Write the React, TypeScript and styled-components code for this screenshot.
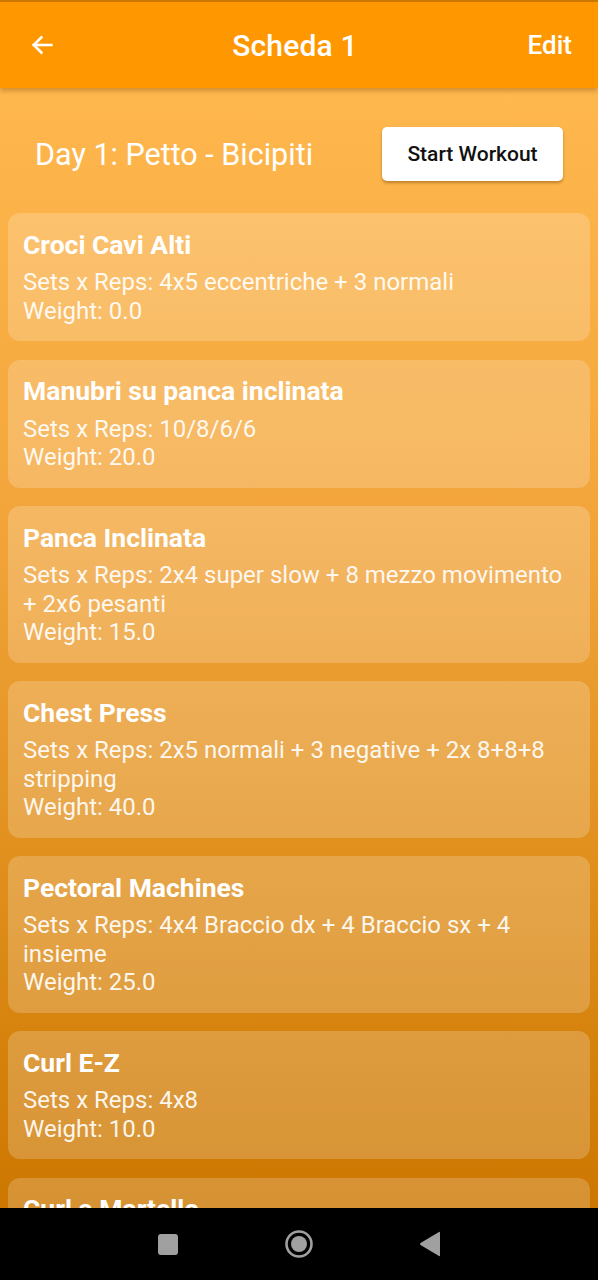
import React from "react";
import styled, { createGlobalStyle } from "styled-components";

const Global = createGlobalStyle`
  html, body { margin: 0; padding: 0; background: #000; }
  body { font-family: Roboto, "Noto Sans", "Liberation Sans", sans-serif; }
  * { box-sizing: border-box; }
`;

const Screen = styled.div`
  width: 598px;
  height: 1280px;
  display: flex;
  flex-direction: column;
  overflow: hidden;
  position: relative;
`;

const Header = styled.header`
  height: 88px;
  flex: none;
  background: #ff9800;
  border-top: 2px solid #c97800;
  display: grid;
  grid-template-columns: 1fr auto 1fr;
  align-items: center;
  padding: 0 26px 0 28px;
  color: #fff;
  position: relative;
  z-index: 2;
  box-shadow: 0 3px 5px rgba(120, 70, 0, 0.35);
`;

const BackButton = styled.button`
  justify-self: start;
  background: none;
  border: none;
  padding: 0;
  display: flex;
  color: #fff;
`;

const Title = styled.h1`
  margin: 0;
  font-size: 30px;
  font-weight: 500;
  letter-spacing: 0.2px;
  transform: translateX(-5px);
`;

const EditButton = styled.button`
  justify-self: end;
  background: none;
  border: none;
  padding: 0;
  color: #fff;
  font-family: inherit;
  font-size: 26px;
  font-weight: 500;
`;

const Content = styled.main`
  flex: 1;
  overflow: hidden;
  background: linear-gradient(180deg, #ffb84e 0%, #f2a43a 40%, #e08f1c 70%, #cc7700 100%);
  padding: 39px 8px 0 8px;
  display: flex;
  flex-direction: column;
`;

const DayRow = styled.div`
  display: flex;
  align-items: center;
  justify-content: space-between;
  padding: 0 27px 0 27px;
  height: 56px;
  margin-bottom: 32px;
`;

const DayTitle = styled.h2`
  margin: 0;
  font-size: 30.5px;
  font-weight: 400;
  color: #fff;
`;

const StartButton = styled.button`
  background: #fff;
  border: none;
  border-radius: 5px;
  width: 181px;
  height: 54px;
  font-family: inherit;
  font-size: 21px;
  font-weight: 500;
  color: #111;
  box-shadow: 0 2px 3px rgba(120, 70, 0, 0.45);
`;

const List = styled.div`
  display: flex;
  flex-direction: column;
  gap: 18.5px;
`;

const Card = styled.section`
  background: rgba(255, 255, 255, 0.2);
  border-radius: 12px;
  padding: 16.5px 15px 16px 15px;
  color: #fff;
  flex: none;
`;

const CardTitle = styled.h3`
  margin: 0 0 8.5px 0;
  font-size: 26.5px;
  font-weight: 700;
  line-height: 30px;
`;

const CardLine = styled.p`
  margin: 0;
  font-size: 24px;
  font-weight: 400;
  line-height: 28.5px;
  color: rgba(255, 255, 255, 0.93);
`;

const NavBar = styled.nav`
  height: 72px;
  flex: none;
  background: #000;
  display: flex;
  align-items: center;
  justify-content: center;
`;

const NavSlot = styled.div`
  width: 131px;
  display: flex;
  justify-content: center;
`;

const SquareIcon = styled.div`
  width: 20px;
  height: 21px;
  border-radius: 3px;
  background: #a0a0a0;
`;

const exercises = [
  { name: "Croci Cavi Alti", sets: "4x5 eccentriche + 3 normali", weight: "0.0" },
  { name: "Manubri su panca inclinata", sets: "10/8/6/6", weight: "20.0" },
  { name: "Panca Inclinata", sets: "2x4 super slow + 8 mezzo movimento + 2x6 pesanti", weight: "15.0" },
  { name: "Chest Press", sets: "2x5 normali + 3 negative + 2x 8+8+8 stripping", weight: "40.0" },
  { name: "Pectoral Machines", sets: "4x4 Braccio dx + 4 Braccio sx + 4 insieme", weight: "25.0" },
  { name: "Curl E-Z", sets: "4x8", weight: "10.0" },
  { name: "Curl a Martello", sets: "4x8", weight: "8.0" },
];

export default function App() {
  return (
    <Screen>
      <Global />
      <Header>
        <BackButton aria-label="Back">
          <svg width="28" height="28" viewBox="0 0 24 24" fill="none" stroke="#fff" strokeWidth="2.2" strokeLinecap="square">
            <path d="M20 12H5" />
            <path d="M11.5 5.5L5 12l6.5 6.5" />
          </svg>
        </BackButton>
        <Title>Scheda 1</Title>
        <EditButton>Edit</EditButton>
      </Header>
      <Content>
        <DayRow>
          <DayTitle>Day 1: Petto - Bicipiti</DayTitle>
          <StartButton>Start Workout</StartButton>
        </DayRow>
        <List>
          {exercises.map((e) => (
            <Card key={e.name}>
              <CardTitle>{e.name}</CardTitle>
              <CardLine>Sets x Reps: {e.sets}</CardLine>
              <CardLine>Weight: {e.weight}</CardLine>
            </Card>
          ))}
        </List>
      </Content>
      <NavBar>
        <NavSlot>
          <SquareIcon />
        </NavSlot>
        <NavSlot>
          <svg width="30" height="30" viewBox="0 0 30 30">
            <circle cx="15" cy="15" r="12.5" fill="none" stroke="#a0a0a0" strokeWidth="2.6" />
            <circle cx="15" cy="15" r="8" fill="#a0a0a0" />
          </svg>
        </NavSlot>
        <NavSlot>
          <svg width="24" height="26" viewBox="0 0 24 26">
            <path d="M22 1.5 L22 24.5 Q22 25.5 21 25 L2.5 14 Q1.5 13 2.5 12 L21 1 Q22 0.5 22 1.5Z" fill="#a0a0a0" />
          </svg>
        </NavSlot>
      </NavBar>
    </Screen>
  );
}
